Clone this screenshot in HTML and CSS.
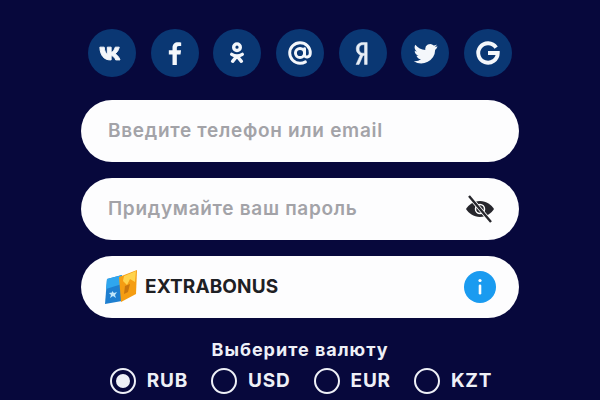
FILE: index.html
```html
<!DOCTYPE html>
<html lang="ru">
<head>
<meta charset="utf-8">
<title>Регистрация</title>
<link rel="stylesheet" href="styles.css">
</head>
<body>
<main class="form">
  <div class="socials">
    <a class="social"><svg viewBox="0 0 24 24" width="26" height="26"><path fill="#f4f7fb" stroke="#f4f7fb" stroke-width=".9" stroke-linejoin="round" d="M.8 6.600h4c.2 3.600 1.600 6 2.900 6.600V6.600h3.500v4.800c1.500-.3 3.200-2.400 3.800-4.800h3.700c-.6 3.100-2.500 5.300-3.900 6.200 1.600.8 3.700 2.700 4.600 5.600h-4c-.8-2.200-2.300-3.700-4.200-4v4h-.9C4.900 18.400 1 14.200.8 6.600z"/></svg></a>
    <a class="social"><svg viewBox="0 0 24 24" width="26" height="26"><path fill="#f4f7fb" d="M13.700 23v-9.700h3.400l.5-3.800h-3.900V7.300c0-1.100.4-1.800 1.900-1.800h2.100V2.200c-.4-.1-1.600-.2-3-.2-3 0-5 1.800-5 5.100v2.400H6.300v3.800h3.400V23z"/></svg></a>
    <a class="social"><svg viewBox="0 0 24 24" width="24" height="24" fill="none" stroke="#f4f7fb" stroke-width="3.400" stroke-linecap="round"><circle cx="12" cy="6.200" r="3.300"/><path d="M6.700 13.400c3.300 2 7.300 2 10.600 0M12 15l-4.400 5.300M12 15l4.400 5.300"/></svg></a>
    <a class="social"><svg viewBox="0 0 24 24" width="26" height="26" fill="none" stroke="#f4f7fb" stroke-width="2.700" stroke-linecap="round"><circle cx="12" cy="12" r="4.200"/><path d="M16.200 8v5.500c0 3.400 5.300 3 5.300-1.500 0-5.500-4.300-9.500-9.500-9.500S2.500 6.800 2.500 12s4.300 9.500 9.500 9.500c2 0 3.600-.5 5-1.300"/></svg></a>
    <a class="social"><svg viewBox="0 0 24 24" width="25" height="25"><path fill="#e8eef6" stroke="#e8eef6" stroke-width=".5" d="M16.500 1.500v21h-2.600v-8.600h-1.400l-3.800 8.600H5.800l4.100-9.100C8 12.500 6 10.700 6 7.600c0-3.900 2.700-6.100 6.200-6.100zM13.900 3.600h-1.500c-2 0-3.700 1.300-3.700 4 0 2.700 1.700 4.100 3.700 4.100h1.500z"/></svg></a>
    <a class="social"><svg viewBox="0 0 24 24" width="25" height="25"><path fill="#f4f7fb" d="M23.500 5.100c-.8.400-1.700.6-2.700.8 1-.6 1.700-1.500 2.100-2.600-.9.500-1.900.9-3 1.100a4.700 4.700 0 0 0-8 4.300C8 8.500 4.500 6.600 2.200 3.700a4.700 4.700 0 0 0 1.500 6.300c-.8 0-1.500-.2-2.100-.6 0 2.300 1.600 4.200 3.800 4.700-.7.200-1.400.2-2.100.1.600 1.900 2.300 3.200 4.400 3.300a9.500 9.500 0 0 1-7 1.900A13.400 13.400 0 0 0 21.300 8.500c.9-.7 1.700-1.500 2.200-3.400z"/></svg></a>
    <a class="social"><svg viewBox="0 0 24 24" width="26" height="26" fill="none" stroke="#f4f7fb" stroke-width="3.600"><path d="M19.500 7a9 9 0 1 0 1.500 5H12"/></svg></a>
  </div>

  <div class="field"><span class="placeholder">Введите телефон или email</span></div>
  <div class="field">
    <span class="placeholder">Придумайте ваш пароль</span>
    <svg class="eye" viewBox="0 0 32 32" width="32" height="32"><path fill="#26262c" d="M16 8C9.500 8 4.500 12 2 16c2.500 4 7.500 8 14 8s11.500-4 14-8c-2.500-4-7.500-8-14-8z"/><circle cx="16" cy="16" r="4.500" fill="none" stroke="#fff" stroke-width="1.500"/><path d="M5 3l22 26" stroke="#fff" stroke-width="4"/><path d="M5 3l22 26" stroke="#26262c" stroke-width="2.400"/></svg>
  </div>
  <div class="field bonus">
    <svg class="cards" viewBox="0 0 34 36" width="34" height="36"><path fill="#1e7fd0" d="M3 10l15-4v26L1 35z"/><path fill="#2fa6ee" d="M3 10l15-4v9L2 20z"/><path fill="#f59d12" d="M15 8l18-7-1 24-15 8z"/><path fill="#ffd34d" d="M20 7l12-5-1 11-5-3-3 6-4-4z"/><path fill="#bfe6fa" d="M8 22l2 2 3-1-2 3 1 3-3-2-3 2 1-3-2-2 3-.4z"/><path fill="#c9760e" d="M21 17l5-2-2 8-4 2z"/></svg>
    <span class="bonus-name">EXTRABONUS</span>
    <span class="info"><svg viewBox="0 0 32 32" width="32" height="32"><circle cx="16" cy="16" r="16" fill="#1a9bf0"/><circle cx="16" cy="9.500" r="1.600" fill="#fff"/><rect x="14.700" y="13.500" width="2.600" height="10" rx="1.300" fill="#fff"/></svg></span>
  </div>

  <div class="currency">
    <div class="currency-title">Выберите валюту</div>
    <div class="currency-options">
      <label class="option"><span class="radio checked"></span>RUB</label>
      <label class="option"><span class="radio"></span>USD</label>
      <label class="option"><span class="radio"></span>EUR</label>
      <label class="option"><span class="radio"></span>KZT</label>
    </div>
  </div>
</main>
</body>
</html>
```
FILE: styles.css
```css
* { box-sizing: border-box; }
html, body { margin: 0; height: 100%; }
body {
  width: 600px;
  height: 400px;
  overflow: hidden;
  background: #07083c;
  font-family: Inter, "Noto Sans", sans-serif;
}
.form {
  width: 438px;
  margin: 0 auto;
  padding-top: 29px;
  display: flex;
  flex-direction: column;
}
.socials {
  display: flex;
  justify-content: space-between;
  padding: 0 7px;
  margin-bottom: 23px;
}
.social {
  width: 48px;
  height: 48px;
  border-radius: 50%;
  background: #0a3773;
  display: flex;
  align-items: center;
  justify-content: center;
}
.field {
  height: 61.500px;
  margin-bottom: 16.500px;
  border-radius: 31px;
  background: #fdfdfe;
  display: flex;
  align-items: center;
  padding: 0 23px 0 27px;
}
.placeholder {
  flex: 1;
  font-size: 19px;
  font-weight: 600;
  letter-spacing: .7px;
  color: #a3a3a8;
}
.bonus { padding-left: 23px; margin-bottom: 0; }
.cards { margin-right: 7px; }
.bonus-name {
  flex: 1;
  font-size: 19px;
  font-weight: 700;
  letter-spacing: .1px;
  color: #1e2024;
}
.info { display: flex; }
.currency { margin-top: 22px; }
.currency-title {
  text-align: center;
  font-size: 18px;
  font-weight: 700;
  letter-spacing: 1px;
  line-height: 20px;
  color: #eef0f7;
}
.currency-options {
  display: flex;
  justify-content: center;
  gap: 23px;
  margin-top: 8px;
  padding-left: 2px;
}
.option {
  display: flex;
  align-items: center;
  gap: 11px;
  font-size: 19px;
  font-weight: 700;
  letter-spacing: .8px;
  color: #eef0f7;
}
.radio {
  width: 26px;
  height: 26px;
  border-radius: 50%;
  border: 2.500px solid #eef0f7;
  display: flex;
  align-items: center;
  justify-content: center;
}
.radio.checked::after {
  content: "";
  width: 14px;
  height: 14px;
  border-radius: 50%;
  background: #eef0f7;
}
```
